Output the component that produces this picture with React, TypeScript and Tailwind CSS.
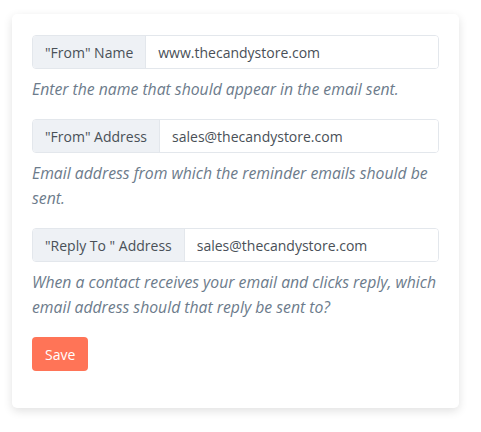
import React from 'react';

interface FieldProps {
  label: string;
  value: string;
  help: string;
}

function Field({ label, value, help }: FieldProps) {
  return (
    <div className="mb-[17px]">
      <div className="flex h-[34px] rounded-[4px] border border-[#e3e7ec] overflow-hidden">
        <span className="flex items-center px-[12px] bg-[#eef1f5] border-r border-[#e3e7ec] text-[#495057] text-[14px] whitespace-nowrap">
          {label}
        </span>
        <input
          className="flex-1 min-w-0 px-[12px] text-[14px] text-[#495057] bg-white outline-none"
          defaultValue={value}
        />
      </div>
      <p className="mt-[8px] text-[15.75px] leading-[25px] italic text-[#6c7b8b]">{help}</p>
    </div>
  );
}

export default function App() {
  return (
    <div className="min-h-screen bg-white pt-[14px] pl-[12px]" style={{ fontFamily: '"Open Sans", sans-serif' }}>
      <div className="w-[447px] rounded-[5px] bg-white shadow-[0_3px_10px_rgba(0,0,0,0.12)] pt-[21px] px-[20px] pb-[37px]">
        <Field
          label={'"From" Name'}
          value="www.thecandystore.com"
          help="Enter the name that should appear in the email sent."
        />
        <Field
          label={'"From" Address'}
          value="sales@thecandystore.com"
          help="Email address from which the reminder emails should be sent."
        />
        <Field
          label={'"Reply To " Address'}
          value="sales@thecandystore.com"
          help="When a contact receives your email and clicks reply, which email address should that reply be sent to?"
        />
        <button className="h-[34px] px-[13px] rounded-[4px] bg-[#ff7457] text-white text-[14px]">Save</button>
      </div>
    </div>
  );
}
